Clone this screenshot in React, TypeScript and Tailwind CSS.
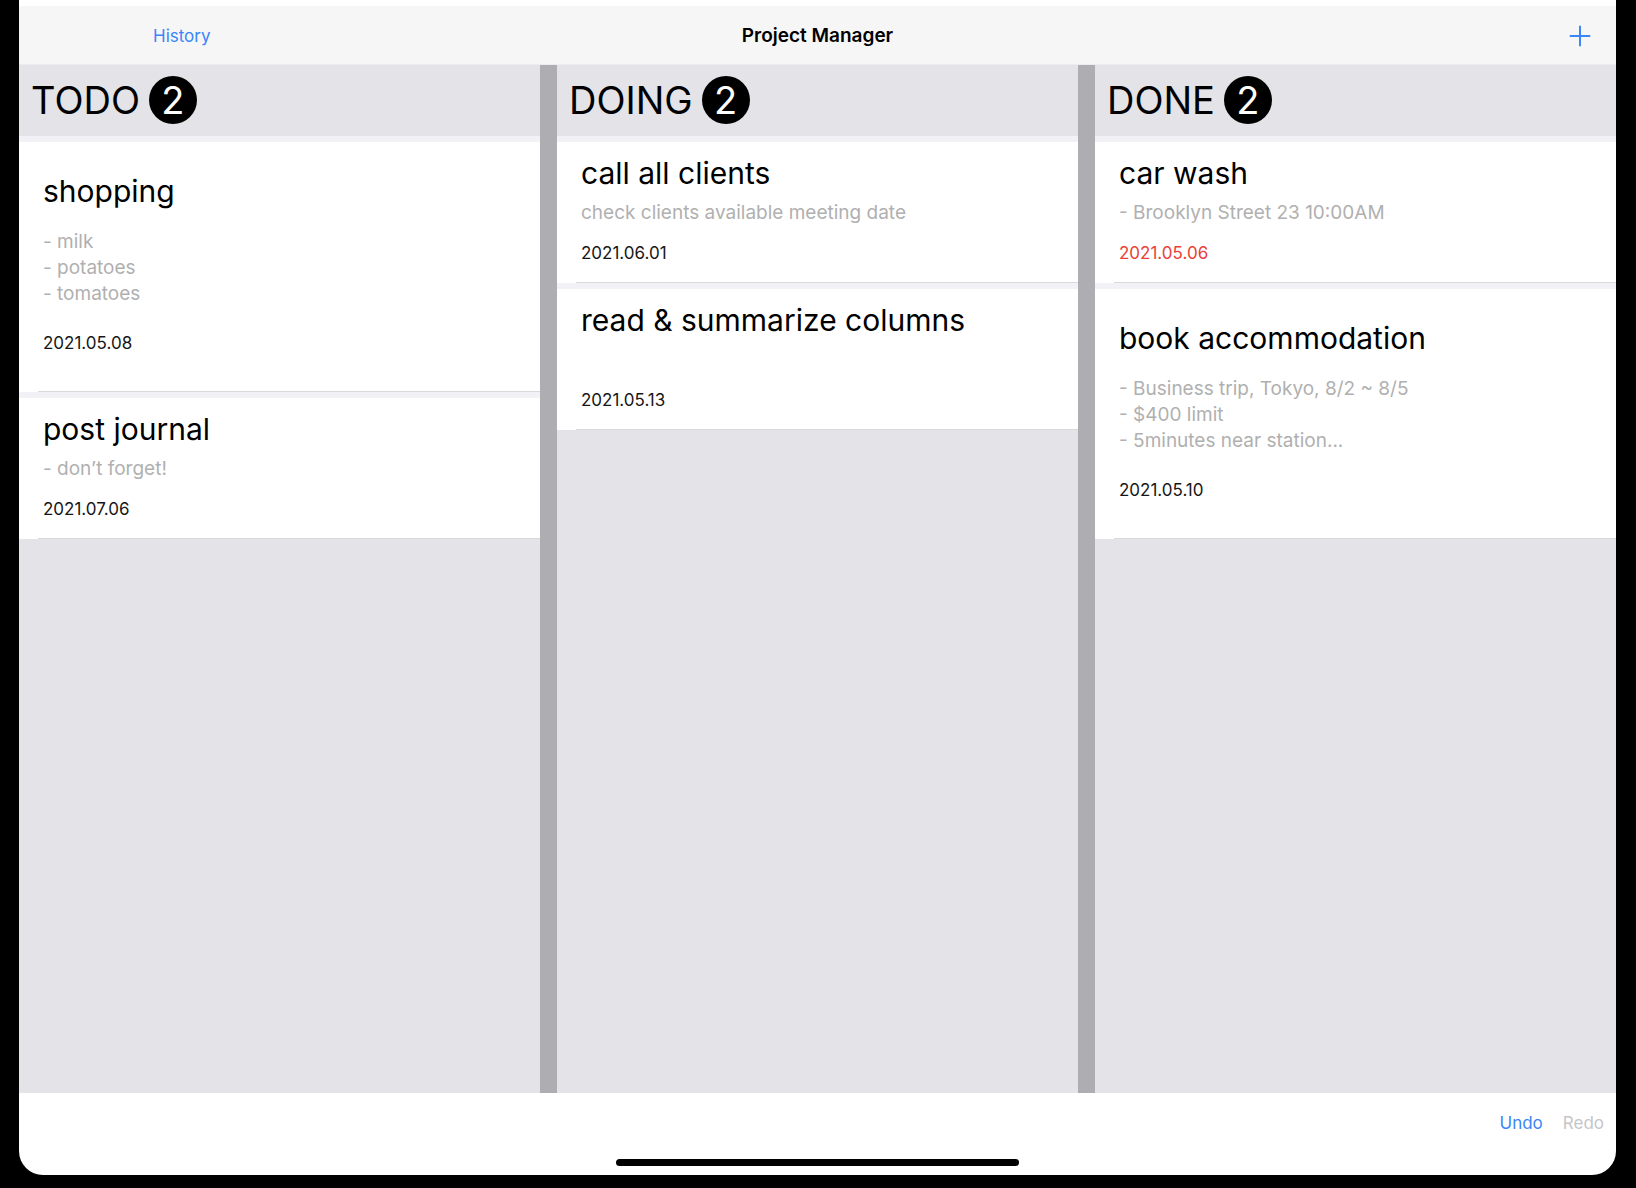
type Task = { title: string; body: string; date: string; overdue?: boolean };
type Board = { name: string; tasks: Task[] };

const boards: Board[] = [
  {
    name: 'TODO',
    tasks: [
      { title: 'shopping', body: '- milk\n- potatoes\n- tomatoes', date: '2021.05.08' },
      { title: 'post journal', body: '- don’t forget!', date: '2021.07.06' },
    ],
  },
  {
    name: 'DOING',
    tasks: [
      { title: 'call all clients', body: 'check clients available meeting date', date: '2021.06.01' },
      { title: 'read & summarize columns', body: '', date: '2021.05.13' },
    ],
  },
  {
    name: 'DONE',
    tasks: [
      { title: 'car wash', body: '- Brooklyn Street 23 10:00AM', date: '2021.05.06', overdue: true },
      {
        title: 'book accommodation',
        body: '- Business trip, Tokyo, 8/2 ~ 8/5\n- $400 limit\n- 5minutes near station...',
        date: '2021.05.10',
      },
    ],
  },
];

function TaskCard({ task }: { task: Task }) {
  const tall = task.body.includes('\n');
  return (
    <li className="bg-white">
      <article className={tall ? 'flex flex-col pt-[30px] pl-6' : 'flex flex-col pt-3 pl-6'}>
        <h3 className="text-[30px] leading-[38px] text-black">{task.title}</h3>
        <p
          className={
            tall
              ? 'mt-[19px] min-h-[26px] whitespace-pre-line text-[19px] leading-[26px] text-[#b0b0b0]'
              : 'mt-2 min-h-[26px] whitespace-pre-line text-[19px] leading-[26px] text-[#b0b0b0]'
          }
        >
          {task.body}
        </p>
        <time
          className={
            (tall ? 'mt-[25px] mb-[37px] ' : 'mt-4 mb-[18px] ') +
            (task.overdue ? 'text-[17px] leading-[22px] text-[#eb4036]' : 'text-[17px] leading-[22px] text-[#161616]')
          }
        >
          {task.date}
        </time>
      </article>
      <div className="ml-[19px] h-px bg-[#d9d9dc]" />
    </li>
  );
}

function BoardColumn({ board }: { board: Board }) {
  return (
    <section className="flex min-w-0 flex-1 flex-col bg-[#e4e3e8]">
      <header className="flex h-[71px] items-center gap-[9px] pb-0.5 pl-3">
        <h2 className="text-[38px] leading-[48px] text-black">{board.name}</h2>
        <span className="flex size-12 items-center justify-center rounded-full bg-black text-[38px] leading-[48px] text-white">
          {board.tasks.length}
        </span>
      </header>
      <ul className="flex flex-col gap-1.5 border-t-[6px] border-[#f2f1f6] bg-[#f2f1f6]">
        {board.tasks.map((task) => (
          <TaskCard key={task.title} task={task} />
        ))}
      </ul>
    </section>
  );
}

export default function App() {
  return (
    <div className="flex min-h-screen flex-col bg-black pr-5 pb-[13px] pl-[19px] font-['Inter',sans-serif]">
      <div className="flex flex-1 flex-col rounded-b-3xl bg-white pt-1.5">
        <nav className="grid h-[59px] grid-cols-3 items-center border-b border-[#ececee] bg-[#f6f6f6] pt-0.5">
          <button type="button" className="ml-[134px] justify-self-start text-[17px] leading-6 text-[#3a86f7]">
            History
          </button>
          <h1 className="text-center text-[19px] leading-6 font-semibold text-black">Project Manager</h1>
          <button type="button" aria-label="Add task" className="mr-[25px] justify-self-end text-[#3a86f7]">
            <svg width="22" height="22" viewBox="0 0 22 22" fill="none" stroke="currentColor" strokeWidth="2" strokeLinecap="round">
              <path d="M11 1.5v19M1.5 11h19" />
            </svg>
          </button>
        </nav>
        <main className="flex flex-1 gap-[17px] bg-[#aeadb2]">
          {boards.map((board) => (
            <BoardColumn key={board.name} board={board} />
          ))}
        </main>
        <footer className="flex h-[82px] flex-col justify-between pt-[18px] pb-[9px]">
          <div className="flex justify-end gap-5 pr-3 text-[17px] leading-6">
            <button type="button" className="text-[#3a86f7]">
              Undo
            </button>
            <button type="button" disabled className="text-[#c6c6c8]">
              Redo
            </button>
          </div>
          <div className="h-[7px] w-[403px] self-center rounded-full bg-black" />
        </footer>
      </div>
    </div>
  );
}
